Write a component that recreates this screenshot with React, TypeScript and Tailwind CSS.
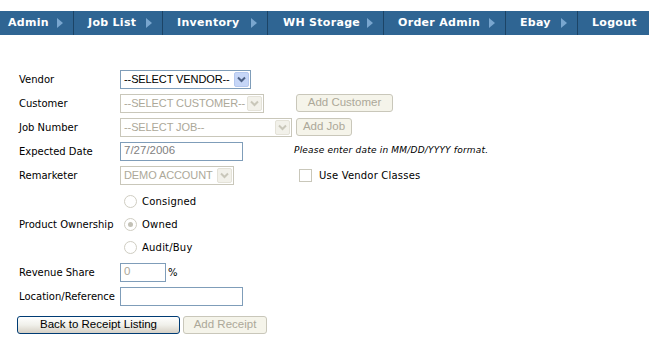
import React from "react";

const navItems = [
  { label: "Admin", w: "w-[74px]", pl: "pl-[8px]", arrow: true },
  { label: "Job List", w: "w-[89px]", pl: "pl-[14px]", arrow: true },
  { label: "Inventory", w: "w-[105px]", pl: "pl-[14px]", arrow: true },
  { label: "WH Storage", w: "w-[116px]", pl: "pl-[15px]", arrow: true },
  { label: "Order Admin", w: "w-[122px]", pl: "pl-[14px]", arrow: true },
  { label: "Ebay", w: "w-[72px]", pl: "pl-[14px]", arrow: true },
  { label: "Logout", w: "w-[71px]", pl: "pl-[14px]", arrow: false },
];

const ctrlFont = { fontFamily: '"Liberation Sans", Arial, sans-serif' };

function Arrow() {
  return (
    <svg width="6" height="10" viewBox="0 0 6 10" className="shrink-0">
      <polygon points="0,0 6,5 0,10" fill="#79a6cf" />
    </svg>
  );
}

function Chevron({ color }: { color: string }) {
  return (
    <svg width="9" height="7" viewBox="0 0 9 7">
      <polyline points="1,1.5 4.5,5 8,1.5" fill="none" stroke={color} strokeWidth="2" />
    </svg>
  );
}

function Select({
  text,
  w,
  disabled,
}: {
  text: string;
  w: string;
  disabled?: boolean;
}) {
  return (
    <div
      className={`${w} h-[19px] flex items-center border ${
        disabled ? "border-[#c9c7ba] text-[#aca899]" : "border-[#7f9db9] text-black"
      } bg-white`}
    >
      <span className="flex-1 pl-[3px] text-[11px] tracking-[-0.1px] leading-none whitespace-nowrap overflow-hidden" style={ctrlFont}>
        {text}
      </span>
      <div
        className={`w-[15px] h-[15px] mr-[1px] shrink-0 flex items-center justify-center rounded-[2px] border ${
          disabled ? "border-[#e4e2d8] bg-[#f2f1ea]" : "border-[#b5c8ee] bg-[#c6d6f7]"
        }`}
      >
        <Chevron color={disabled ? "#c9c7ba" : "#4d6185"} />
      </div>
    </div>
  );
}

function Btn({ text, w, disabled }: { text: string; w: string; disabled?: boolean }) {
  return (
    <div
      className={`${w} h-[18px] flex items-center justify-center rounded-[3px] border text-[11.5px] leading-none ${
        disabled
          ? "border-[#c9c7ba] text-[#aca899] bg-[#f5f4ea]"
          : "border-[#003c74] text-black bg-gradient-to-b from-white via-[#f0f0ea] to-[#d6d0c5]"
      }`}
      style={ctrlFont}
    >
      {text}
    </div>
  );
}

function Radio({ checked }: { checked?: boolean }) {
  return (
    <div className="w-[13px] h-[13px] rounded-full border border-[#cfcdc2] bg-white flex items-center justify-center">
      {checked && <div className="w-[5px] h-[5px] rounded-full bg-[#c3c1b6]" />}
    </div>
  );
}

function Row({ label, children, h = "h-[24px]" }: { label: string; children?: React.ReactNode; h?: string }) {
  return (
    <div className={`flex items-center ${h}`}>
      <div className="w-[101px] shrink-0 text-[10px] text-black whitespace-nowrap">{label}</div>
      <div className="flex items-center">{children}</div>
    </div>
  );
}

export default function App() {
  return (
    <div
      className="w-[666px] h-[343px] bg-white overflow-hidden"
      style={{ fontFamily: '"DejaVu Sans", Verdana, sans-serif' }}
    >
      <div className="pt-[11px]">
        <div className="flex h-[24px] w-[649px] bg-[#2f6593]">
          {navItems.map((n, i) => (
            <div
              key={n.label}
              className={`${n.w} ${n.pl} pr-[10px] h-full flex items-center justify-between ${
                i < navItems.length - 1 ? "border-r border-[#1c4466]" : ""
              }`}
            >
              <span className="text-white font-bold text-[11px] tracking-[0.3px] whitespace-nowrap">{n.label}</span>
              {n.arrow && <Arrow />}
            </div>
          ))}
        </div>
      </div>

      <div className="pl-[19px] pt-[32px]">
        <Row label="Vendor">
          <Select text="--SELECT VENDOR--" w="w-[131px]" />
        </Row>
        <Row label="Customer">
          <Select text="--SELECT CUSTOMER--" w="w-[144px]" disabled />
          <div className="ml-[32px]">
            <Btn text="Add Customer" w="w-[97px]" disabled />
          </div>
        </Row>
        <Row label="Job Number">
          <Select text="--SELECT JOB--" w="w-[172px]" disabled />
          <div className="ml-[4px]">
            <Btn text="Add Job" w="w-[56px]" disabled />
          </div>
        </Row>
        <Row label="Expected Date">
          <div
            className="w-[123px] h-[19px] border border-[#7f9db9] text-[#7f7f7f] text-[11.5px] leading-none flex items-center pl-[3px]"
            style={ctrlFont}
          >
            7/27/2006
          </div>
          <span className="ml-[51px] text-[9px] italic tracking-[0.2px]">Please enter date in MM/DD/YYYY format.</span>
        </Row>
        <Row label="Remarketer" h="h-[25px]">
          <Select text="DEMO ACCOUNT" w="w-[114px]" disabled />
          <div className="ml-[65px] w-[13px] h-[13px] border border-[#c9c7ba] bg-white" />
          <span className="ml-[7px] text-[10px] tracking-[0.2px]">Use Vendor Classes</span>
        </Row>
        <div className="flex items-center h-[72px]">
          <div className="w-[101px] shrink-0 text-[10px] whitespace-nowrap">Product Ownership</div>
          <div className="flex flex-col pl-[4px] gap-[10px] text-[10px] tracking-[0.2px]">
            <div className="flex items-center gap-[5px] h-[13px]">
              <Radio />
              <span>Consigned</span>
            </div>
            <div className="flex items-center gap-[5px] h-[13px]">
              <Radio checked />
              <span>Owned</span>
            </div>
            <div className="flex items-center gap-[5px] h-[13px]">
              <Radio />
              <span>Audit/Buy</span>
            </div>
          </div>
        </div>
        <Row label="Revenue Share">
          <div
            className="w-[46px] h-[19px] border border-[#7f9db9] text-[#aca899] text-[11.5px] leading-none flex items-center pl-[3px]"
            style={ctrlFont}
          >
            0
          </div>
          <span className="ml-[2px] text-[10px]">%</span>
        </Row>
        <Row label="Location/Reference">
          <div className="w-[123px] h-[19px] border border-[#7f9db9] bg-white" />
        </Row>
      </div>
      <div className="flex pl-[17px] pt-[8px] gap-[3px]">
        <Btn text="Back to Receipt Listing" w="w-[163px]" />
        <Btn text="Add Receipt" w="w-[84px]" disabled />
      </div>
    </div>
  );
}
